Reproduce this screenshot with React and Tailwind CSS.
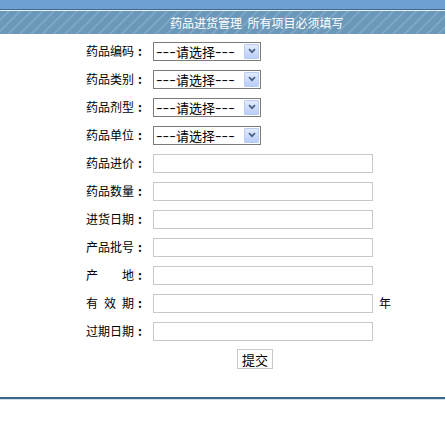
const font = { fontFamily: '"Noto Sans CJK SC", "Liberation Sans", sans-serif' }

function Label({ chars }) {
  // chars: array of characters spread across a 4-char box, plus a colon
  return (
    <div className="flex w-[67px] items-center">
      <span className="flex w-[48px] justify-between">
        {chars.map((c, i) => (
          <span key={i}>{c}</span>
        ))}
      </span>
      <span className="w-[12px] text-center font-bold">:</span>
    </div>
  )
}

function Dashes() {
  return (
    <span className="inline-block w-[20px] overflow-visible">
      <span className="inline-block origin-left scale-x-[1.65] font-['Liberation_Sans',sans-serif] text-[12px]">---</span>
    </span>
  )
}

function FakeSelect() {
  return (
    <div className="flex h-[19px] w-[108px] items-center justify-between border border-[#7a7a7a] bg-white pl-[2px] pr-[1px]">
      <span className="flex items-center leading-none">
        <Dashes />
        <span className="text-[13px]">请选择</span>
        <Dashes />
      </span>
      <span className="flex h-[15px] w-[15px] items-center justify-center rounded-[1px] border border-[#b8cbf3] bg-gradient-to-b from-[#e2eafd] to-[#b9cdf7]">
        <svg width="8" height="6" viewBox="0 0 8 6">
          <path d="M1 1.2 L4 4.2 L7 1.2" fill="none" stroke="#4d6185" strokeWidth="1.8" />
        </svg>
      </span>
    </div>
  )
}

function FakeInput() {
  return <div className="h-[19px] w-[220px] border border-[#c8c8c8] bg-white" />
}

const selects = [
  ['药', '品', '编', '码'],
  ['药', '品', '类', '别'],
  ['药', '品', '剂', '型'],
  ['药', '品', '单', '位'],
]

const inputs = [
  { chars: ['药', '品', '进', '价'] },
  { chars: ['药', '品', '数', '量'] },
  { chars: ['进', '货', '日', '期'] },
  { chars: ['产', '品', '批', '号'] },
  { chars: ['产', '地'] },
  { chars: ['有', '效', '期'], suffix: '年' },
  { chars: ['过', '期', '日', '期'] },
]

export default function App() {
  return (
    <div className="min-h-[430px] w-[445px] bg-white text-[12px] text-black" style={font}>
      <div className="h-[9px] bg-[#6fa0d3]" />
      <div className="h-[1px] bg-[#3f6a94]" />
      <div className="h-[1px] bg-[#e8f0f8]" />
      <div className="flex h-[23px] items-center bg-[repeating-linear-gradient(135deg,#6b98b9_0px,#6b98b9_5px,#83abca_6px,#6b98b9_8px)] pl-[170px] text-white">
        药品进货管理&nbsp;&nbsp;所有项目必须填写
      </div>

      <div className="flex flex-col pt-[3px]">
        {selects.map((chars, i) => (
          <div key={i} className="flex h-[28px] items-center pl-[86px]">
            <Label chars={chars} />
            <FakeSelect />
          </div>
        ))}
        {inputs.map((row, i) => (
          <div key={i} className="flex h-[28px] items-center pl-[86px]">
            <Label chars={row.chars} />
            <FakeInput />
            {row.suffix && <span className="ml-[6px]">{row.suffix}</span>}
          </div>
        ))}
        <div className="flex h-[28px] items-center pl-[237px]">
          <button className="flex h-[20px] w-[36px] items-center justify-center border border-[#c8c8c8] bg-white text-[13px] leading-none">
            提交
          </button>
        </div>
      </div>

      <div className="mt-[24px] h-[2px] bg-[#3e6588]" />
      <div className="h-[1px] bg-[#cfe0ee]" />
    </div>
  )
}
